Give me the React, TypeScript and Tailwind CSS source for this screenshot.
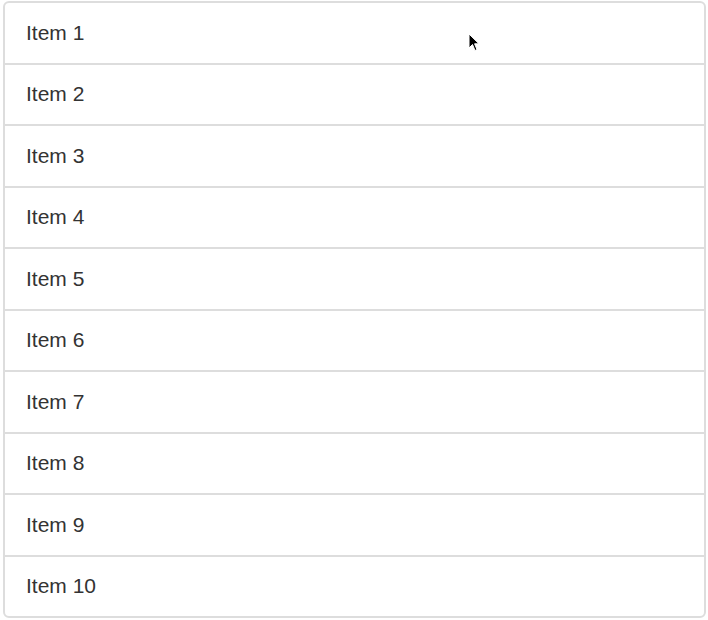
import React from "react";

export default function App() {
  const items = Array.from({ length: 10 }, (_, i) => `Item ${i + 1}`);
  return (
    <div className="relative w-[708px] h-[620px] bg-white" style={{ fontFamily: '"Liberation Sans", Arial, sans-serif' }}>
      <div className="flex flex-col pt-[1px] pl-[3px] pr-[2px]">
        {items.map((t, i) => (
          <div
            key={t}
            className={`relative flex items-center h-[63.5px] -mb-[2px] border-2 border-[#dddddd] bg-white pl-[21px] pb-[1px] text-[21px] text-[#333333] ${
              i === 0 ? "rounded-t-[6px]" : ""
            } ${i === items.length - 1 ? "rounded-b-[6px]" : ""}`}
          >
            {t}
          </div>
        ))}
      </div>
      <svg className="absolute left-[468px] top-[33px]" width="12" height="19" viewBox="0 0 12 19">
        <path d="M1 1 L1 15 L4.5 11.5 L7 17.5 L9 16.6 L6.6 10.8 L11 10.8 Z" fill="#000" stroke="#fff" strokeWidth="1" strokeLinejoin="round" />
      </svg>
    </div>
  );
}
